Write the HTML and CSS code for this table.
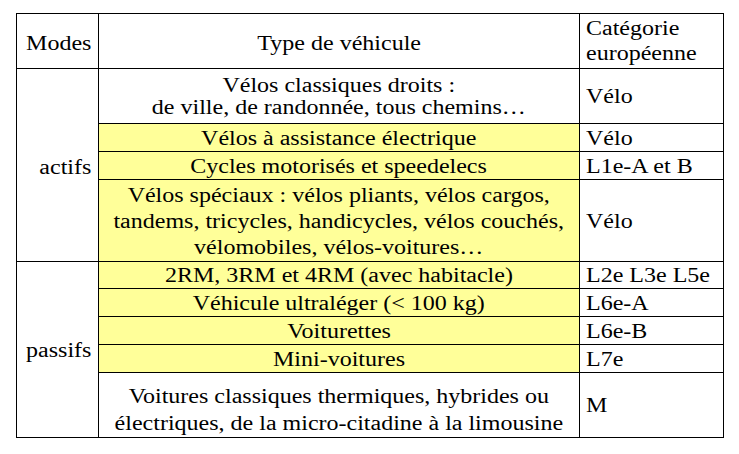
FILE: index.html
```html
<!DOCTYPE html>
<html lang="fr">
<head>
<meta charset="utf-8">
<title>Modes et catégories de véhicules</title>
<link rel="stylesheet" href="styles.css">
</head>
<body>
<div class="sheet">
  <div class="grid">
    <div class="c mode head"><span class="t">Modes</span></div>
    <div class="c type head"><span class="t">Type de véhicule</span></div>
    <div class="c cat lh25"><span class="t">Catégorie<br>européenne</span></div>

    <div class="c mode span4 nudge"><span class="t">actifs</span></div>
    <div class="c type"><span class="t">Vélos classiques droits :<br>de ville, de randonnée, tous chemins…</span></div>
    <div class="c cat"><span class="t">Vélo</span></div>

    <div class="c type hl"><span class="t">Vélos à assistance électrique</span></div>
    <div class="c cat"><span class="t">Vélo</span></div>

    <div class="c type hl"><span class="t">Cycles motorisés et speedelecs</span></div>
    <div class="c cat"><span class="t">L1e-A et B</span></div>

    <div class="c type hl lh26"><span class="t">Vélos spéciaux : vélos pliants, vélos cargos,<br>tandems, tricycles, handicycles, vélos couchés,<br>vélomobiles, vélos-voitures…</span></div>
    <div class="c cat"><span class="t">Vélo</span></div>

    <div class="c mode span5"><span class="t">passifs</span></div>
    <div class="c type hl"><span class="t">2RM, 3RM et 4RM (avec habitacle)</span></div>
    <div class="c cat"><span class="t">L2e L3e L5e</span></div>

    <div class="c type hl"><span class="t">Véhicule ultraléger (&lt; 100 kg)</span></div>
    <div class="c cat"><span class="t">L6e-A</span></div>

    <div class="c type hl"><span class="t">Voiturettes</span></div>
    <div class="c cat"><span class="t">L6e-B</span></div>

    <div class="c type hl"><span class="t">Mini-voitures</span></div>
    <div class="c cat"><span class="t">L7e</span></div>

    <div class="c type lh27 low"><span class="t">Voitures classiques thermiques, hybrides ou<br>électriques, de la micro-citadine à la limousine</span></div>
    <div class="c cat"><span class="t">M</span></div>
  </div>
</div>
</body>
</html>
```

FILE: styles.css
```css
html, body {
  margin: 0;
  padding: 0;
  background: #ffffff;
}

.sheet {
  padding: 13px 0 0 16px;
  font-family: "Liberation Serif", "Times New Roman", serif;
  font-size: 20px;
  color: #000000;
}

.grid {
  display: inline-grid;
  grid-template-columns: 82px 481px 144px;
  grid-template-rows: 55px 55px 28px 28px 82px 27px 28px 28px 28px 65px;
  border-top: 1px solid #000;
  border-left: 1px solid #000;
}

.c {
  display: flex;
  align-items: center;
  box-sizing: border-box;
  border-right: 1px solid #000;
  border-bottom: 1px solid #000;
  line-height: 22px;
}

.t {
  display: inline-block;
  white-space: nowrap;
  transform: scaleX(1.2);
}

.mode {
  justify-content: flex-end;
  padding-right: 7px;
}
.mode .t { transform-origin: right center; }

.type {
  justify-content: center;
  text-align: center;
}
.type .t { transform-origin: center center; }

.cat {
  justify-content: flex-start;
  padding-left: 6px;
}
.cat .t { transform-origin: left center; }

.head { padding-top: 3px; }
.nudge { padding-top: 4px; }

.span4 { grid-row: span 4; }
.span5 { grid-row: span 5; }

.hl { background: #ffff99; }

.lh25 { line-height: 25px; }
.lh26 { line-height: 26px; }
.lh27 { line-height: 27px; }
.low { padding-top: 10px; }
```
